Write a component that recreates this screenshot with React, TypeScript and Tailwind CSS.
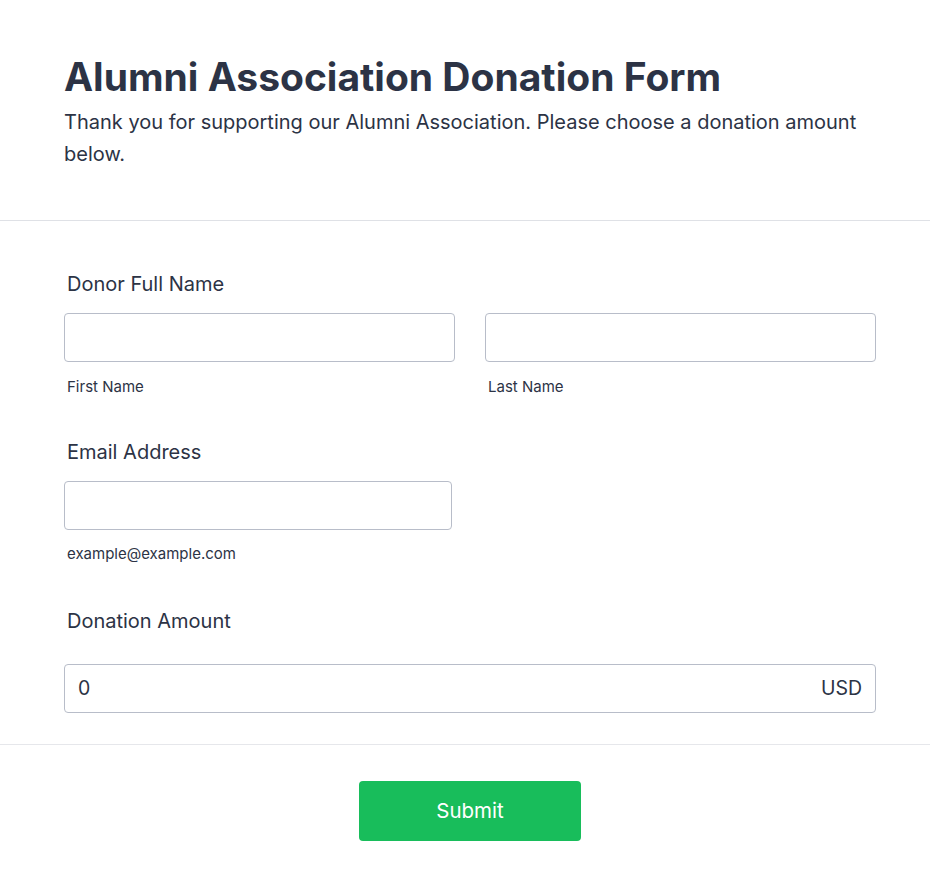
export default function App() {
  return (
    <div className="min-h-[890px] bg-white text-[#2c3345]" style={{ fontFamily: 'Inter, "Noto Sans", sans-serif' }}>
      <div className="pl-[64px] pr-[54px] pt-[54px] pb-[50px]">
        <h1 className="text-[39px] leading-[46px] font-bold">Alumni Association Donation Form</h1>
        <p className="mt-[6px] text-[20px] leading-[32px]">
          Thank you for supporting our Alumni Association. Please choose a donation amount below.
        </p>
      </div>
      <div className="border-t border-[#dfe1e6]" />
      <div className="pl-[64px] pr-[54px] pt-[50px] pb-[31px]">
        <div className="pl-[3px] text-[20px] leading-[27px]">Donor Full Name</div>
        <div className="mt-[15px] grid grid-cols-2 gap-[30px]">
          <div>
            <div className="h-[49px] rounded-[4px] border border-[#b8bdc9]" />
            <div className="mt-[15px] pl-[3px] text-[15px] leading-[20px]">First Name</div>
          </div>
          <div>
            <div className="h-[49px] rounded-[4px] border border-[#b8bdc9]" />
            <div className="mt-[15px] pl-[3px] text-[15px] leading-[20px]">Last Name</div>
          </div>
        </div>
        <div className="mt-[42px] pl-[3px] text-[20px] leading-[27px]">Email Address</div>
        <div className="mt-[15px] w-[388px]">
          <div className="h-[49px] rounded-[4px] border border-[#b8bdc9]" />
          <div className="mt-[14px] pl-[3px] text-[15px] leading-[20px]">example@example.com</div>
        </div>
        <div className="mt-[44px] pl-[3px] text-[20px] leading-[27px]">Donation Amount</div>
        <div className="mt-[29px] h-[49px] rounded-[4px] border border-[#b8bdc9] flex items-center justify-between pl-[13px] pr-[13px] text-[19.5px]">
          <span>0</span>
          <span>USD</span>
        </div>
      </div>
      <div className="border-t border-[#e6e7eb]" />
      <div className="pl-[64px] pr-[54px] flex justify-center pt-[36px]">
        <button className="w-[222px] h-[60px] rounded-[4px] bg-[#18bd5b] text-white text-[20.5px]">Submit</button>
      </div>
    </div>
  );
}
